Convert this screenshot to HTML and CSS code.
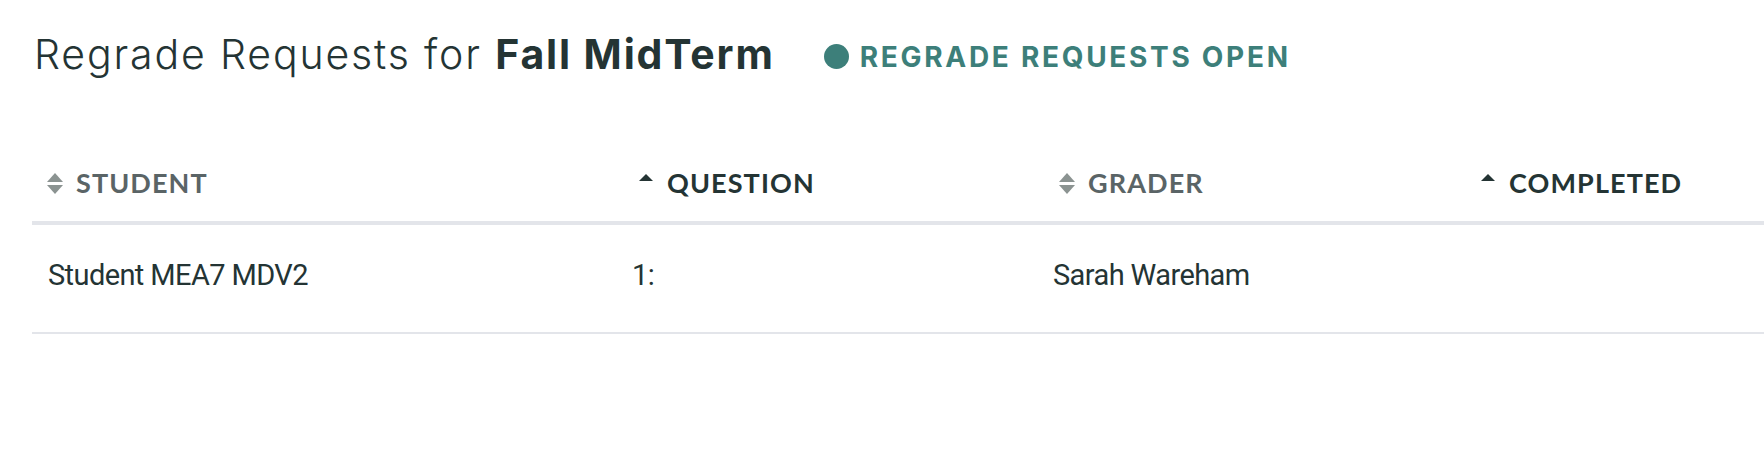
FILE: index.html
```html
<!DOCTYPE html>
<html lang="en">
<head>
    <meta charset="UTF-8">
    <title>Regrade Requests</title>
    <link rel="stylesheet" href="styles.css">
</head>
<body>
    <div class="page">
        <div class="page-head">
            <h1 class="title">Regrade Requests for <strong>Fall MidTerm</strong></h1>
            <span class="status"><span class="status-dot"></span>Regrade Requests Open</span>
        </div>

        <table class="requests">
            <colgroup>
                <col class="col-student">
                <col class="col-question">
                <col class="col-grader">
                <col>
            </colgroup>
            <thead>
                <tr>
                    <th>
                        <span class="sort-head">
                            <svg class="sort-icon" width="16" height="21" viewBox="0 0 16 21"><path d="M8 0 L16 9 H0 Z"/><path d="M8 21 L16 12 H0 Z"/></svg>
                            Student
                        </span>
                    </th>
                    <th class="sorted">
                        <span class="sort-head shifted">
                            <svg class="sort-icon" width="16" height="21" viewBox="0 0 16 21"><path d="M8 1 L15 8 H1 Z"/></svg>
                            Question
                        </span>
                    </th>
                    <th>
                        <span class="sort-head shifted">
                            <svg class="sort-icon" width="16" height="21" viewBox="0 0 16 21"><path d="M8 0 L16 9 H0 Z"/><path d="M8 21 L16 12 H0 Z"/></svg>
                            Grader
                        </span>
                    </th>
                    <th class="sorted">
                        <span class="sort-head shifted">
                            <svg class="sort-icon" width="16" height="21" viewBox="0 0 16 21"><path d="M8 1 L15 8 H1 Z"/></svg>
                            Completed
                        </span>
                    </th>
                </tr>
            </thead>
            <tbody>
                <tr>
                    <td>Student MEA7 MDV2</td>
                    <td>1:</td>
                    <td>Sarah Wareham</td>
                    <td></td>
                </tr>
            </tbody>
        </table>
    </div>
</body>
</html>
```

FILE: styles.css
```css
body {
    margin: 0;
    font-family: Lato, "Liberation Sans", sans-serif;
    color: #243434;
    background: #fff;
}
.page {
    padding: 30px 0 0 34px;
}
.page-head {
    display: flex;
    align-items: baseline;
    gap: 49px;
}
.title {
    margin: 0;
    font-family: Inter, Lato, sans-serif;
    font-size: 41px;
    line-height: 48px;
    font-weight: 300;
    letter-spacing: 1.85px;
}
.title strong {
    font-weight: 700;
}
.status {
    display: flex;
    align-items: center;
    gap: 11px;
    color: #3d7f7a;
    font-family: Inter, Lato, sans-serif;
    font-size: 28px;
    font-weight: 700;
    text-transform: uppercase;
    letter-spacing: 2.7px;
}
.status-dot {
    width: 25px;
    height: 25px;
    border-radius: 50%;
    background: #3d7f7a;
}
.requests {
    width: calc(100% + 2px);
    margin: 69px 0 0 -2px;
    border-collapse: collapse;
    table-layout: fixed;
}
.col-student {
    width: 584px;
}
.col-question {
    width: 421px;
}
.col-grader {
    width: 421px;
}
.requests th {
    padding: 20px 15px 22px;
    text-align: left;
    font-size: 27px;
    line-height: 32px;
    font-weight: 700;
    text-transform: uppercase;
    letter-spacing: 1.1px;
    color: #5a6466;
    border-bottom: 4px solid #e3e5ea;
}
.requests th.sorted {
    color: #243434;
}
.sort-head {
    display: flex;
    align-items: flex-start;
    gap: 13px;
}
.sort-head.shifted {
    margin-left: 7px;
}
.sort-icon {
    flex: none;
    margin-top: 6px;
    fill: #8b9391;
}
.sorted .sort-icon {
    fill: #243434;
}
.requests td {
    padding: 32px 16px 39px;
    font-family: Roboto, Lato, sans-serif;
    font-size: 29px;
    line-height: 36px;
    letter-spacing: -0.6px;
    color: #243434;
    border-bottom: 2px solid #e3e5ea;
}
```
